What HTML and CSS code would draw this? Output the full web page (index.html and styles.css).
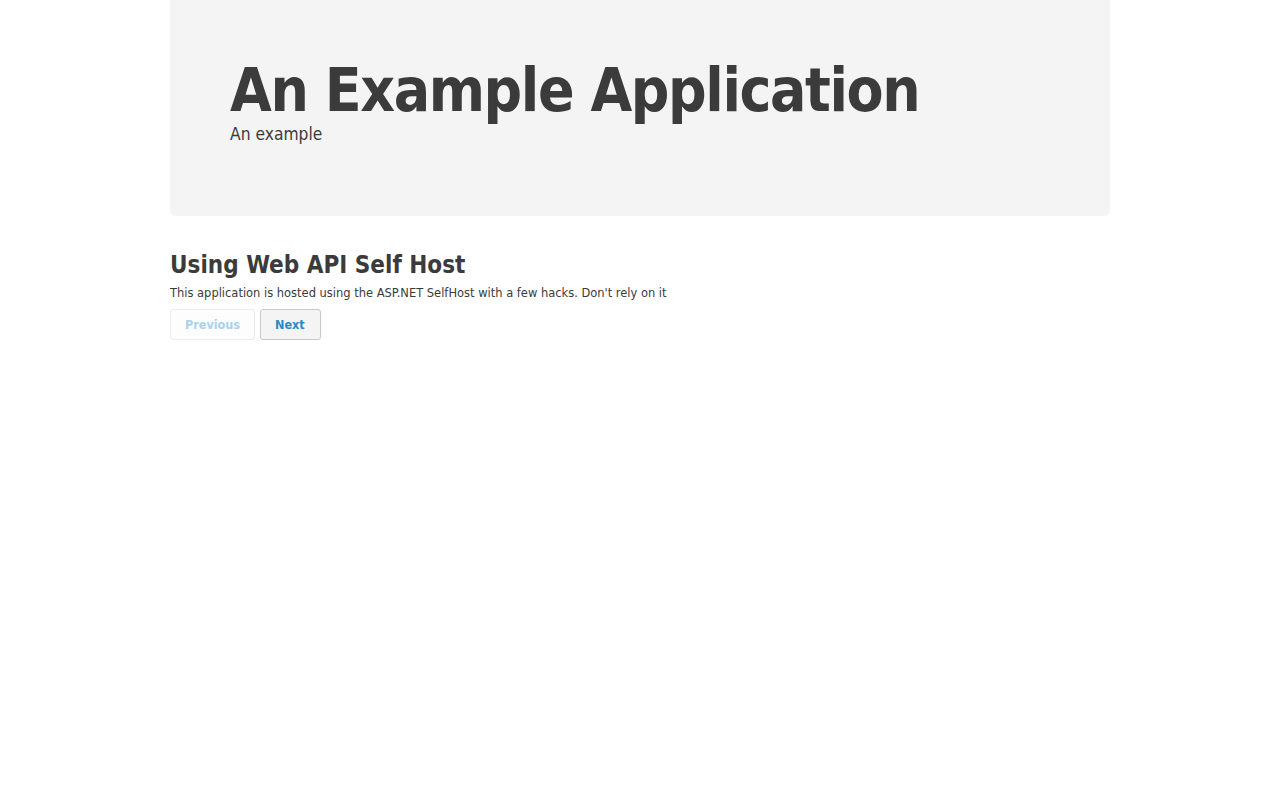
FILE: index.html
```html
<!DOCTYPE html>
<html>
<head>
<meta charset="utf-8">
<title>An Example Application</title>
<link rel="stylesheet" href="styles.css">
</head>
<body>
<div class="container">
  <header class="hero">
    <h1 class="hero-title">An Example Application</h1>
    <p class="hero-sub">An example</p>
  </header>
  <section class="content">
    <h2 class="section-title">Using Web API Self Host</h2>
    <p class="section-text">This application is hosted using the ASP.NET SelfHost with a few hacks. Don't rely on it</p>
    <div class="pager">
      <button class="btn btn-disabled" type="button">Previous</button>
      <button class="btn btn-next" type="button">Next</button>
    </div>
  </section>
</div>
</body>
</html>
```
FILE: styles.css
```css
html, body {
  margin: 0;
  padding: 0;
  background: #ffffff;
}
body {
  font-family: "DejaVu Sans Condensed", "DejaVu Sans", Tahoma, sans-serif;
  color: #3b3b3b;
}
.container {
  width: 940px;
  margin: 0 auto;
}
.hero {
  background: #f4f4f4;
  border-radius: 0 0 6px 6px;
  padding: 60px 60px 68px;
}
.hero-title {
  margin: 0;
  font-size: 60px;
  line-height: 60px;
  font-weight: bold;
  letter-spacing: -1.4px;
  color: #3b3b3b;
}
.hero-sub {
  margin: 0;
  font-size: 17.3px;
  line-height: 28px;
  color: #3b3b3b;
}
.content {
  padding-top: 30px;
}
.section-title {
  margin: 0;
  font-size: 24px;
  line-height: 38px;
  font-weight: bold;
}
.section-text {
  margin: 0 0 8px;
  font-size: 12.75px;
  line-height: 17px;
}
.pager {
  display: flex;
  gap: 5px;
}
.btn {
  font-family: inherit;
  font-size: 12.5px;
  font-weight: bold;
  color: #2a8ac6;
  background: #f4f4f4;
  border: 1px solid #c8c8c8;
  border-radius: 3px;
  padding: 0 14px;
  height: 31px;
  cursor: pointer;
}
.btn-next {
  padding: 0 15px 0 14px;
}
.btn-disabled {
  color: #a9d3ec;
  background: #fdfdfd;
  border-color: #ececec;
  cursor: default;
}
```
